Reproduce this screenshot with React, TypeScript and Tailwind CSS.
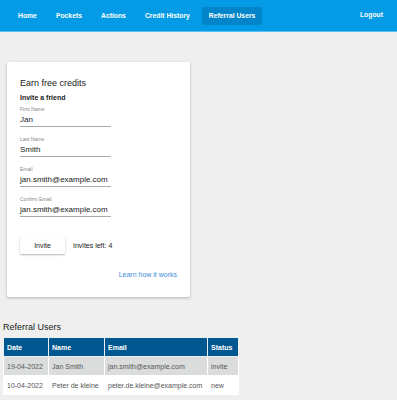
const navItems = ["Home", "Pockets", "Actions", "Credit History", "Referral Users"];

const fields = [
  { label: "First Name", value: "Jan" },
  { label: "Last Name", value: "Smith" },
  { label: "Email", value: "jan.smith@example.com" },
  { label: "Confirm Email", value: "jan.smith@example.com" },
];

const referrals = [
  { date: "19-04-2022", name: "Jan Smith", email: "jan.smith@example.com", status: "invite" },
  { date: "10-04-2022", name: "Peter de kleine", email: "peter.de.kleine@example.com", status: "new" },
];

export default function App() {
  return (
    <div className="min-h-[400px] bg-[#efefef] font-['Liberation_Sans',Arial,sans-serif] text-[#222]">
      <nav className="flex h-[32px] items-center border-b border-[#5cbdf0] bg-[#039be5] pl-[11px] pr-[7px] text-[6.8px] font-bold text-white">
        <ul className="flex items-center gap-[5px]">
          {navItems.map((item) => (
            <li
              key={item}
              className={`flex h-[18px] items-center px-[7px] leading-[9px] ${
                item === "Referral Users" ? "bg-[#0386c9]" : ""
              }`}
            >
              {item}
            </li>
          ))}
        </ul>
        <span className="ml-auto flex h-[18px] items-center px-[7px]">Logout</span>
      </nav>

      <main className="px-[3px] pt-[30px]">
        <section className="ml-[4px] w-[183px] rounded-[2px] bg-white px-[13px] pb-[18px] pt-[16px] shadow-[0_1px_3px_rgba(0,0,0,0.25)]">
          <h2 className="text-[9px] leading-[11px]">Earn free credits</h2>
          <h3 className="mt-[4px] text-[7px] font-bold leading-[9px]">Invite a friend</h3>

          <div className="mt-[4px] flex flex-col gap-[9px]">
            {fields.map((field) => (
              <div key={field.label}>
                <p className="text-[5px] leading-[6px] text-[#888]">{field.label}</p>
                <p className="mt-[3px] w-[91px] border-b border-[#aaa] pb-px text-[8px] leading-[10px]">
                  {field.value}
                </p>
              </div>
            ))}
          </div>

          <div className="mt-[19px] flex items-center gap-[8px]">
            <button className="h-[18px] w-[45px] rounded-[1px] bg-white text-[7px] leading-[9px] text-[#222] shadow-[0_1px_2px_rgba(0,0,0,0.3)]">
              Invite
            </button>
            <span className="text-[7px] leading-[9px]">Invites left: 4</span>
          </div>

          <div className="mt-[16px] flex justify-end">
            <a href="#" className="text-[7px] leading-[9px] text-[#3d8ddb]">
              Learn how it works
            </a>
          </div>
        </section>

        <h2 className="mt-[25px] text-[9px] leading-[11px]">Referral Users</h2>
        <table className="mt-[4px] w-[235px] table-fixed border-collapse text-left text-[7px] leading-[9px]">
          <colgroup>
            <col className="w-[45px]" />
            <col className="w-[56px]" />
            <col className="w-[103px]" />
            <col className="w-[31px]" />
          </colgroup>
          <thead>
            <tr className="h-[19px] bg-[#01578f] text-white">
              {["Date", "Name", "Email", "Status"].map((h) => (
                <th key={h} className="border border-[#e9eef2] px-[3px] font-bold">
                  {h}
                </th>
              ))}
            </tr>
          </thead>
          <tbody>
            {referrals.map((r, i) => (
              <tr key={r.email} className={`h-[19px] ${i === 0 ? "bg-[#dbdddd]" : "bg-white"}`}>
                <td className="border border-white px-[3px] text-[#555]">{r.date}</td>
                <td className="border border-white px-[3px] text-[#555]">{r.name}</td>
                <td className="border border-white px-[3px] text-[#555]">{r.email}</td>
                <td className="border border-white px-[3px] text-[#555]">{r.status}</td>
              </tr>
            ))}
          </tbody>
        </table>
      </main>
    </div>
  );
}
